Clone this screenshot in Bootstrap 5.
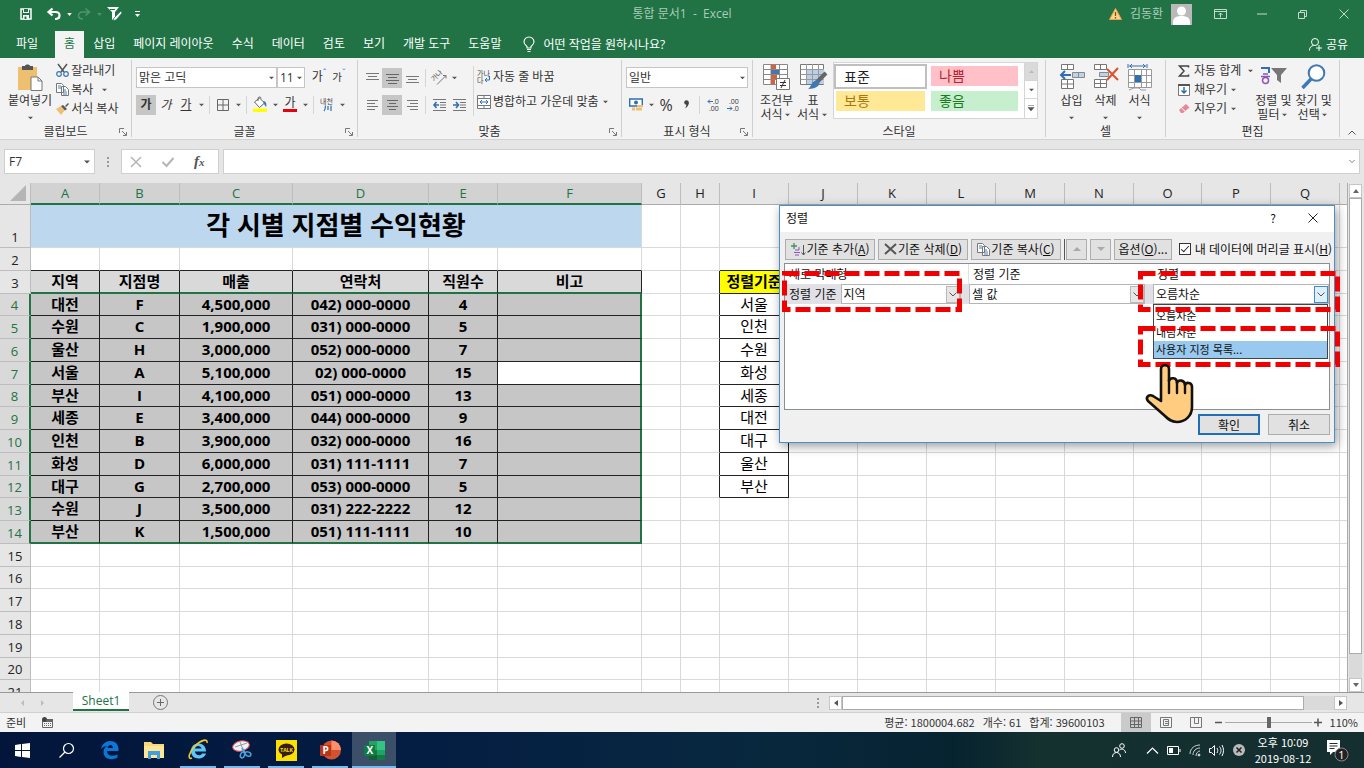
<!DOCTYPE html>
<html lang="ko">
<head>
<meta charset="utf-8">
<meta name="viewport" content="width=device-width, initial-scale=1">
<title>통합 문서1 - Excel</title>
<link href="https://cdn.jsdelivr.net/npm/bootstrap@5.3.0/dist/css/bootstrap.min.css" rel="stylesheet">
<style>
:root{--green:#217346;--ink:#333}
html,body{height:100%}
body{font:12px/16px "Open Sans","Noto Sans CJK KR",sans-serif;color:var(--ink);background:#e6e6e6;overflow:hidden}
svg{display:block;flex:none;overflow:visible}
button{color:inherit;border:0;background:none;padding:0;white-space:nowrap}
select,input{font:inherit;color:inherit}
a{color:inherit;text-decoration:none}
.app{height:100vh;min-height:600px}
/* title bar and tabs */
.titlebar{background:var(--green);height:28px;color:#a9cdb8}
.side{width:420px}
.wb{width:41px;height:28px;display:flex;align-items:center;justify-content:center;flex:none}
.tabs{background:var(--green);height:30px;color:#fff;padding:3px 16px 0 7px}
.tabs a{padding:0 9px;line-height:26px;white-space:nowrap}
.tabs .on{background:#f3f3f3;color:var(--green)}
/* ribbon */
.ribbon{background:#f3f3f3;height:82px;border-bottom:1px solid #d2d2d2;padding-top:2px}
.grp{border-right:1px solid #cfcfcf;height:77px;position:relative}
.grp-body{height:65px}
.cap{text-align:center;line-height:18px;margin-top:-2px}
.launch{position:absolute;right:4px;bottom:1px}
.w1{width:132px}.w2{width:226px}.w3{width:264px}.w4{width:131px}.w6{width:120px}.w7{width:174px}
.two{display:flex;flex-direction:column;gap:6px;padding-top:7px}
.two>*{height:21px}
.stk{padding-top:1px}
.ib{width:20px;height:20px;display:flex;align-items:center;justify-content:center;flex:none}
.ib.on{background:#c6c6c6}
.car{width:10px;height:20px;display:flex;align-items:center;justify-content:center;flex:none}
.sep{width:1px;height:18px;background:#d5d5d5;margin:0 3px;flex:none}
.tall{height:50px;margin-top:6px}
.combo{display:flex;align-items:center;background:#fff;border:1px solid #c6c6c6;height:21px;flex:none}
.combo select{appearance:none;border:0;background:none;outline:0;padding:0 0 0 2px;flex:1 1 auto;min-width:0;height:18px;line-height:18px}
.row-btn{display:flex;align-items:center;gap:2px;height:19px}
.big{display:flex;flex-direction:column;align-items:center;justify-content:flex-start;line-height:14px;padding-top:4px}
.big .pic{height:30px}
.big .car{height:14px}
.gallery{border:1px solid #d5d5d5;background:#fff;height:57px;width:205px;margin-top:2px}
.gal-grid{display:grid;grid-template-columns:93px 91px;grid-auto-rows:25px;gap:0 2px;padding-top:1px}
.gal-grid button{font-size:14px;text-align:left;padding:0 0 0 8px;margin:2px 2px 3px;line-height:20px}
.gal-grid .sel{outline:2px solid #bfbfbf;margin:2px;background:#fff;color:#222}
.bad{background:#ffc0c8;color:#b8232f}.mid{background:#ffe896;color:#a8780f}.good{background:#c6efce;color:#1b7a1f}
.gal-sc{width:13px;border-left:1px solid #d5d5d5}
.gal-sc button{height:18px;display:flex;align-items:center;justify-content:center;border-bottom:1px solid #d5d5d5}
/* formula bar */
.fbar{height:43px;padding:9px 4px 9px}
.fbox{background:#fff;border:1px solid #cfcfcf;height:25px;display:flex;align-items:center}
.fbox input{border:0;outline:0;padding:0 4px;min-width:0;background:none}
.nm{width:91px}
/* worksheet */
.sheet{min-height:0;position:relative}
.cells{overflow:hidden;min-width:0;background:#fff;border-right:1px solid #ababab}
.ws{table-layout:fixed;border-collapse:separate;border-spacing:0;width:1350px;font-size:15px;color:#000;text-align:center}
.ws th,.ws td{padding:0;border:0 solid #d9d9d9;border-width:0 1px 1px 0;line-height:18px;overflow:hidden;white-space:nowrap}
.ws td{line-height:16px;padding-bottom:2px}
.ws tr{height:23px}
.ws tbody tr:nth-child(4n){height:22px}
.ws thead tr{height:22px}
.ws tbody tr:first-child{height:43px}
.ws th{background:#e6e6e6;font-weight:400;font-size:13px;color:#222;border-color:#bdbdbd}
.ws tbody th{vertical-align:bottom;line-height:20px}
.ws thead th{border-bottom-color:#ababab;line-height:16px;padding-bottom:2px}
.ws thead .pick{background:#d2d2d2;color:var(--green);border-bottom:2px solid var(--green);padding-bottom:1px}
.ws tbody .pick{background:#d9d9d9;color:var(--green);border-right:2px solid var(--green)}
.ws .ttl{background:#bdd7ee;font-size:26px;font-weight:700;line-height:36px}
.ws .bk{border-color:#222}
.ws .bb{border-bottom-color:#222}
.ws .br{border-right-color:#222}
.ws .hd{background:#d9d9d9;font-weight:700}
.ws .hs{border-bottom:2px solid var(--green)}
.ws .dt{background:#c6c6c6;font-weight:700}
.ws .act{background:#fff}
.ws .re{border-right:2px solid var(--green)}
.ws .be{border-bottom:2px solid var(--green)}
.ws .ye{background:#ff0;font-weight:700}
.vs{width:16px;padding:1px 2px 0 1px}
.vs button,.hs-bar button{background:#fff;border:1px solid #c6c6c6;width:13px;height:14px;display:flex;align-items:center;justify-content:center;flex:none}
.track{background:#dadada}
.thumb{background:#fff;border:1px solid #ababab}
.tabbar{height:21px;border-top:1px solid #999;border-bottom:1px solid #d0d0d0;padding-right:17px}
.stab{background:#fff;color:var(--green);width:56px;height:19px;margin-top:-1px;border-bottom:2px solid var(--green);line-height:17px;text-align:center}
.hs-bar{width:518px}
.status{height:19px;background:#f3f3f3;font:11px/19px "Noto Sans CJK KR",sans-serif;padding:0 6px}
.vw{width:30px;height:19px;display:flex;align-items:center;justify-content:center}
.vw.on{background:#cacaca}
/* taskbar */
.taskbar{height:36px;background:linear-gradient(90deg,#03153a 0,#041d43 30%,#08283f 55%,#062330 70%,#14302f 76%,#152e30 100%);color:#fff}
.slot{width:44px;height:36px;display:flex;align-items:center;justify-content:center;position:relative}
.slot.run::after{content:"";position:absolute;left:4px;right:4px;bottom:0;height:2px;background:#76b9ed}
.slot.cur{background:#3b5068}
.slot.cur::after{left:0;right:0}
.clock{font:11px/16px "Noto Sans CJK KR",sans-serif;text-align:center;width:60px;margin-right:6px}
/* sort dialog */
.dlg{position:absolute;right:29px;top:22px;width:556px;height:238px;background:#f0f0f0;border:1px solid #4a90c8;box-shadow:2px 3px 10px #0006;color:#111;font-family:"Noto Sans CJK KR",sans-serif}
.dlg-title{background:#fff;height:26px;padding:0 16px 2px 6px}
.db{background:#e1e1e1;border:1px solid #adadad;height:21px;display:flex;align-items:center;justify-content:center;gap:1px;flex:none}
.w90{width:90px}.w21{width:21px}.w58{width:58px}.w62{width:62px}
.dbar{padding:7px 2px 4px 5px;height:31px}
.bar2{width:1px;height:21px;background:#555;margin:0 1px 0 2px}
.g3{gap:3px}
.dlist{margin:0 4px;border:1px solid #8a8f94;background:#fff;height:147px}
.dgrid{display:grid;grid-template-columns:184px 184px 1fr}
.dgrid>*{height:20px;display:flex;align-items:center}
.dgrid .sh{background:#e0e0e6}
.dgrid .combo{height:20px;border-color:#b5b5b5}
.arr{width:14px;height:17px;background:#e6e6e6;border:1px solid #b9b9b9;display:flex;align-items:center;justify-content:center;flex:none}
.arr.hot{background:#e0f0fb;border-color:#3c8dd0}
.drop{position:absolute;left:373px;top:98px;width:175px;background:#fff;border:1px solid #444;padding:2px 0 0;margin:0;list-style:none;font-size:11px;line-height:17px}
.drop li{padding-left:2px}
.drop .cur{background:#99c9ef}
.ok{border:2px solid #1f6fb8}
.note{position:absolute;pointer-events:none}
.n1{left:2px;top:65px}.n2{left:358px;top:65px}.n3{left:358px;top:120px}.hand{left:366px;top:158px}
.chk{width:12px;height:12px;margin:0;appearance:none;border:1px solid #333;background:#fff;display:grid;place-items:center;flex:none}
.chk:checked::after{content:"";width:4px;height:8px;border:solid #222;border-width:0 1px 1px 0;transform:rotate(42deg);margin-top:-2px}
</style>
</head>
<body>
<svg width="0" height="0" class="position-absolute">
<symbol id="c" viewBox="0 0 6 4"><path d="M0 .5h6L3 3.5z" fill="#555"/></symbol>
<symbol id="l" viewBox="0 0 8 8"><path d="M.5 5V.5H5M3 3l4 4M7.500 4v3.500H4" fill="none" stroke="#777"/></symbol>
<symbol id="v" viewBox="0 0 8 5"><path d="M.5.5L4 4 7.500.5" fill="none" stroke="#555"/></symbol>
</svg>
<div class="app d-flex flex-column">
<header class="titlebar d-flex align-items-center justify-content-between flex-shrink-0">
 <div class="side d-flex align-items-center ps-3">
  <button class="ib" aria-label="저장"><svg width="12" height="12" viewBox="0 0 12 12"><path d="M1 1h10v10H1z" fill="none" stroke="#fff" stroke-width="1.500"/><path d="M3 1h6v4H3zM3 7h6v4.500H3z" fill="#fff"/><path d="M4 1h4v3H4zM4.500 8.500h2V11h-2z" fill="#217346"/></svg></button>
  <button class="ib ms-2" aria-label="실행 취소"><svg width="14" height="12" viewBox="0 0 14 12"><path d="M5.500.5L1.500 4l4 3.500M2 4h6.500C11 4 12.500 5.500 12.500 7.500S11 11 8 11" fill="none" stroke="#fff" stroke-width="2.200"/></svg></button>
  <span class="car"><svg width="5" height="3" viewBox="0 0 6 4"><path d="M0 0h6L3 4z" fill="#fff"/></svg></span>
  <button class="ib" aria-label="다시 실행"><svg width="14" height="12" viewBox="0 0 14 12"><path d="M8.500.5l4 3.500-4 3.500M12 4H5.500C3 4 1.500 5.500 1.500 7.500S3 11 6 11" fill="none" stroke="#4f9470" stroke-width="1.600"/></svg></button>
  <span class="car"><svg width="5" height="3" viewBox="0 0 6 4"><path d="M0 0h6L3 4z" fill="#4f9470"/></svg></span>
  <button class="ib" aria-label="필터"><svg width="15" height="14" viewBox="0 0 15 14"><path d="M0 0h12L8 5v6l-3 2V5z" fill="#fff"/><path d="M14 4L7 11l-1 2.500L9 13l6-7z" fill="#fff" stroke="#217346" stroke-width=".7"/><path d="M3 2.500h5" stroke="#217346"/></svg></button>
  <span class="car ms-2"><svg width="5" height="6" viewBox="0 0 5 6"><path d="M0 .5h5" stroke="#fff"/><path d="M0 3h5L2.500 6z" fill="#fff"/></svg></span>
 </div>
 <div>통합 문서1 &nbsp;- &nbsp;Excel</div>
 <div class="side d-flex align-items-center justify-content-end">
  <svg width="13" height="12" viewBox="0 0 13 12"><path d="M6.500.5l6 11H.5z" fill="#fbd38a" stroke="#e9a548"/><path d="M6.500 4v4M6.500 9v1.500" stroke="#8a4b10" stroke-width="1.300"/></svg>
  <span class="ms-2 me-2">김동환</span>
  <svg class="me-2" width="21" height="21" viewBox="0 0 21 21"><path fill="#b9b9b9" d="M0 0h21v21H0z"/><circle cx="10.500" cy="7" r="4.500" fill="#fff"/><path d="M2 21v-3c0-4 3-6 8.500-6s8.500 2 8.500 6v3z" fill="#fff"/></svg>
  <button class="wb" aria-label="리본 표시 옵션"><svg width="13" height="10" viewBox="0 0 13 10"><path d="M.5.5h12v9H.5zM.5 2.500h12M6.500 8.500V4M4.500 6l2-2 2 2" fill="none" stroke="#c3dccd"/></svg></button>
  <button class="wb" aria-label="최소화"><svg width="10" height="2"><path d="M0 1h10" stroke="#c3dccd"/></svg></button>
  <button class="wb" aria-label="복원"><svg width="9" height="9" viewBox="0 0 9 9"><path d="M.5 2.500h6v6h-6zM2.500 2V.5h6v6H7" fill="none" stroke="#c3dccd"/></svg></button>
  <button class="wb" aria-label="닫기"><svg width="10" height="10" viewBox="0 0 10 10"><path d="M.5.5l9 9m0-9l-9 9" stroke="#c3dccd"/></svg></button>
 </div>
</header>
<nav class="tabs d-flex flex-shrink-0">
 <a href="#" class="me-2">파일</a><a href="#" class="on">홈</a><a href="#">삽입</a><a href="#">페이지 레이아웃</a><a href="#">수식</a><a href="#">데이터</a><a href="#">검토</a><a href="#">보기</a><a href="#">개발 도구</a><a href="#">도움말</a>
 <a href="#" class="d-flex align-items-center gap-2 ms-1"><svg width="12" height="15" viewBox="0 0 12 15"><path d="M4 11V9.500C2 8 1 7 1 5a5 5 0 0110 0c0 2-1 3-3 4.500V11zM4 12.500h4M4.500 14.500h3" fill="none" stroke="#fff" stroke-width="1.100"/></svg>어떤 작업을 원하시나요?</a>
 <a href="#" class="ms-auto pe-0 d-flex align-items-center gap-1"><svg width="13" height="13" viewBox="0 0 13 13"><circle cx="6" cy="4" r="3.500" fill="none" stroke="#fff"/><path d="M.5 12.500c0-3 1.500-4.500 4-5M10 7v6M7 10h6" fill="none" stroke="#fff"/></svg>공유</a>
</nav>
<section class="ribbon d-flex flex-shrink-0">
 <div class="grp w1"><div class="grp-body d-flex">
  <button class="big ps-2"><span class="pic"><svg width="26" height="27" viewBox="0 0 26 27"><path d="M1 3h19v23H1z" fill="#ecc06f"/><path d="M5 2h3c0-2 5-2 5 0h3v4H5z" fill="#555"/><path d="M14 13h7l4 4v9.500H14z" fill="#fff" stroke="#777"/><path d="M21 13v4h4" fill="none" stroke="#777"/></svg></span>붙여넣기<svg class="mt-2" width="5" height="4"><use href="#c"/></svg></button>
  <div class="ps-1 stk"><button class="row-btn"><svg width="13" height="13" viewBox="0 0 13 13"><path d="M2 0l6 8M11 0L5 8" stroke="#555" stroke-width="1.500"/><circle cx="3" cy="10" r="2.300" fill="none" stroke="#3f78b5" stroke-width="1.200"/><circle cx="10" cy="10" r="2.300" fill="none" stroke="#3f78b5" stroke-width="1.200"/></svg>잘라내기</button>
  <button class="row-btn"><svg width="13" height="13" viewBox="0 0 13 13"><path d="M.5.5h5l2 2v7h-7zM5.500 3.500h4l3 3v6h-7z" fill="#fff" stroke="#777"/><path d="M2 3h3M2 5h3M7 7h3M7 9h4M7 11h4" stroke="#4a7db5"/></svg>복사<span class="car ms-1"><svg width="5" height="4"><use href="#c"/></svg></span></button>
  <button class="row-btn"><svg width="13" height="12" viewBox="0 0 13 12"><path d="M0 6l5-3 4 4-4 5z" fill="#eebf76"/><path d="M5 3l2-1 4 4-2 1.500zM9 3l3-3 1 1-3 3z" fill="#555"/></svg>서식 복사</button></div>
 </div><div class="cap">클립보드</div><svg class="launch" width="8" height="8"><use href="#l"/></svg></div>

 <div class="grp w2"><div class="grp-body px-1 two"><div class="d-flex">
  <label class="combo flex-fill"><select aria-label="글꼴"><option>맑은 고딕</option></select><span class="car"><svg width="5" height="4"><use href="#c"/></svg></span></label>
  <label class="combo"><select aria-label="크기"><option>11</option></select><span class="car"><svg width="5" height="4"><use href="#c"/></svg></span></label>
  <button class="ib ms-1">가<sup class="text-primary">ˆ</sup></button><button class="ib me-1"><small>가</small><sup class="text-primary">ˇ</sup></button></div>
  <div class="d-flex align-items-center"><button class="ib on fw-bold">가</button><button class="ib fst-italic">가</button><button class="ib text-decoration-underline">가</button><span class="car"><svg width="5" height="4"><use href="#c"/></svg></span><span class="sep"></span>
  <button class="ib" aria-label="테두리"><svg width="12" height="12" viewBox="0 0 12 12"><path d="M.5.5h11v11H.5zM6 0v12M0 6h12" fill="none" stroke="#666"/></svg></button><span class="car"><svg width="5" height="4"><use href="#c"/></svg></span><span class="sep"></span>
  <button class="ib" aria-label="채우기 색"><svg width="14" height="15" viewBox="0 0 14 15"><path d="M1.500 5l5-4 5 5-5 4.500z" fill="#fff" stroke="#666"/><path d="M5 4V1.500a1.500 1.500 0 013 0" fill="none" stroke="#666"/><path d="M10 4c3 0 4 3 3 6l-2-3z" fill="#3f78b5"/><path d="M0 11.500h14v3.500H0z" fill="#ff0"/></svg></button><span class="car"><svg width="5" height="4"><use href="#c"/></svg></span>
  <button class="ib flex-column"><span class="lh-1">가</span><svg width="14" height="3"><path fill="#e8000b" d="M0 0h14v3H0z"/></svg></button><span class="car"><svg width="5" height="4"><use href="#c"/></svg></span><span class="sep"></span>
  <button class="ib" aria-label="윗주"><svg width="14" height="14" viewBox="0 0 14 14"><text x="0" y="6" font-size="7" fill="#444">내천</text><path d="M5.500 7.500c0 3 0 4-1.500 5.500M8 8v4M11 7.500V13" stroke="#3f78b5" stroke-width="1.300" fill="none"/></svg></button><span class="car"><svg width="5" height="4"><use href="#c"/></svg></span></div>
 </div><div class="cap">글꼴</div><svg class="launch" width="8" height="8"><use href="#l"/></svg></div>

 <div class="grp w3"><div class="grp-body d-flex ps-1"><div class="two">
  <div class="d-flex align-items-center"><button class="ib" aria-label="위쪽"><svg width="13" height="12"><path d="M0 1.500h13M2 4.500h9M0 7.500h13" stroke="#777"/></svg></button><button class="ib on" aria-label="가운데"><svg width="13" height="12"><path d="M0 2.500h13M2 5.500h9M0 8.500h13M2 11.500h9" stroke="#666"/></svg></button><button class="ib" aria-label="아래쪽"><svg width="13" height="10"><path d="M0 3.500h13M2 6.500h9M0 9.500h13" stroke="#777"/></svg></button><span class="sep"></span><button class="ib" aria-label="방향"><svg width="15" height="14" viewBox="0 0 15 14"><text transform="rotate(-45 4 9)" x="1" y="9" font-size="7" fill="#555">가나</text><path d="M5 13.500L14 4.500M14 7.500v-3h-3" fill="none" stroke="#777"/></svg></button><span class="car"><svg width="5" height="4"><use href="#c"/></svg></span></div>
  <div class="d-flex align-items-center"><button class="ib" aria-label="왼쪽 맞춤"><svg width="11" height="10"><path d="M0 .5h11M0 3.500h8M0 6.500h11M0 9.500h8" stroke="#777"/></svg></button><button class="ib on" aria-label="가운데 맞춤"><svg width="11" height="10"><path d="M0 .5h11M2 3.500h7M0 6.500h11M2 9.500h7" stroke="#666"/></svg></button><button class="ib" aria-label="오른쪽 맞춤"><svg width="11" height="10"><path d="M0 .5h11M3 3.500h8M0 6.500h11M3 9.500h8" stroke="#777"/></svg></button><span class="sep"></span><button class="ib" aria-label="내어쓰기"><svg width="13" height="12" viewBox="0 0 13 12"><path d="M0 .5h13M7 3.500h6M7 6h6M7 8.500h6M0 11.500h13" stroke="#777"/><path d="M6 6H1M3.500 3L1 6l2.500 3" stroke="#2f6fb3" stroke-width="1.600" fill="none"/></svg></button><button class="ib" aria-label="들여쓰기"><svg width="13" height="12" viewBox="0 0 13 12"><path d="M0 .5h13M7 3.500h6M7 6h6M7 8.500h6M0 11.500h13" stroke="#777"/><path d="M0 6h5M3 3l2.500 3L3 9" stroke="#2f6fb3" stroke-width="1.600" fill="none"/></svg></button></div></div>
  <span class="sep tall ms-1"></span>
  <div class="two"><button class="row-btn"><svg width="14" height="13" viewBox="0 0 14 13"><text x="0" y="6" font-size="7" fill="#444">가나</text><text x="0" y="13" font-size="7" fill="#444">다</text><path d="M12.500 6v4H8M10 8l-2 2 2 2" fill="none" stroke="#2f6fb3"/></svg>자동 줄 바꿈</button>
  <button class="row-btn"><svg width="14" height="14" viewBox="0 0 14 14"><path d="M.5.5h13v13H.5zM.5 3.500h13M.5 10.500h13M7 0v3M7 11v3" fill="#fff" stroke="#777"/><path d="M3 7h8M5 5L3 7l2 2M9 5l2 2-2 2" stroke="#2f6fb3" fill="none"/></svg>병합하고 가운데 맞춤<span class="car"><svg width="5" height="4"><use href="#c"/></svg></span></button></div>
 </div><div class="cap">맞춤</div><svg class="launch" width="8" height="8"><use href="#l"/></svg></div>

 <div class="grp w4"><div class="grp-body px-1 two"><div><label class="combo"><select aria-label="표시 형식"><option>일반</option></select><span class="car"><svg width="5" height="4"><use href="#c"/></svg></span></label></div>
  <div class="d-flex align-items-center"><button class="ib" aria-label="통화"><svg width="14" height="13" viewBox="0 0 14 13"><path d="M.7 1h12.600v7H.7z" fill="#fff" stroke="#2f6fb3" stroke-width="1.400"/><circle cx="7" cy="4.500" r="2" fill="#2f6fb3"/><path d="M8 7h6v2H8zM7 9.500h6v3H7z" fill="#eebf76"/><path d="M3 9.500h3v3H3z" fill="#eebf76"/></svg></button><span class="car"><svg width="5" height="4"><use href="#c"/></svg></span><button class="ib fs-6">%</button><button class="ib" aria-label="쉼표 스타일"><svg width="5" height="9" viewBox="0 0 5 9"><circle cx="2.500" cy="2.500" r="2.300" fill="#444"/><path d="M4.800 2.500C4.800 5 3.500 7 1 8.500c1-2 1.500-3 1.500-5z" fill="#444"/></svg></button><span class="sep"></span>
  <button class="ib" aria-label="자릿수 늘림"><svg width="13" height="12" viewBox="0 0 13 12"><text x="6" y="5" font-size="7" fill="#333">.0</text><text x="2" y="12" font-size="7" fill="#333">.00</text><path d="M6 2.500H1M3 .5l-2 2 2 2" stroke="#2f6fb3" fill="none"/></svg></button><button class="ib" aria-label="자릿수 줄임"><svg width="13" height="12" viewBox="0 0 13 12"><text x="2" y="5" font-size="7" fill="#333">.00</text><text x="6" y="12" font-size="7" fill="#333">.0</text><path d="M0 9.500h5M3 7.500l2 2-2 2" stroke="#2f6fb3" fill="none"/></svg></button></div>
 </div><div class="cap">표시 형식</div><svg class="launch" width="8" height="8"><use href="#l"/></svg></div>

 <div class="grp flex-fill"><div class="grp-body d-flex justify-content-center gap-1">
  <button class="big"><span class="pic"><svg width="27" height="26" viewBox="0 0 27 26"><path d="M.5.5h24v20H.5zM.5 5.500h24M.5 10.500h24M.5 15.500h24M8 0v20M16.500 0v20" fill="#fff" stroke="#888"/><path d="M8 1h5v4H8zM8 11h6v4H8zM8 16h4v4H8z" fill="#d9603b"/><path d="M8 6h8v4H8z" fill="#3f78b5"/><path d="M13.500 14.500h13v11h-13z" fill="#fff" stroke="#777"/><path d="M17 18.500h6M17 21.500h6M22 16l-4 8" stroke="#333"/></svg></span>조건부<span class="d-flex align-items-center">서식<span class="car"><svg width="5" height="4"><use href="#c"/></svg></span></span></button>
  <button class="big"><span class="pic"><svg width="27" height="26" viewBox="0 0 27 26"><path d="M.5.5h23v20H.5z" fill="#fff" stroke="#777"/><path d="M6 5h18v15H6z" fill="#b9cfe6"/><path d="M.5 5.500h23M.5 10.500h23M.5 15.500h23M6.500 0v20M12.500 0v20M18.500 0v20" stroke="#999"/><path d="M26 9L17 18" stroke="#666" stroke-width="4"/><path d="M17 16c3 1 3 4 1 6s-6 3-10 3c3-1 3-8 9-9z" fill="#3f78b5"/></svg></span>표<span class="d-flex align-items-center">서식<span class="car"><svg width="5" height="4"><use href="#c"/></svg></span></span></button>
  <div class="gallery d-flex justify-content-between"><div class="gal-grid"><button class="sel">표준</button><button class="bad">나쁨</button><button class="mid">보통</button><button class="good">좋음</button></div>
   <div class="gal-sc d-flex flex-column"><button class="track" aria-label="위로"><svg width="5" height="3"><path d="M0 3h5L2.500 0z" fill="#bbb"/></svg></button><button aria-label="아래로"><svg width="5" height="4"><use href="#c"/></svg></button><button class="border-0" aria-label="자세히"><svg width="6" height="6"><path d="M0 .5h6M0 2.500h6L3 6z" fill="#555" stroke="#555" stroke-width=".5"/></svg></button></div></div>
 </div><div class="cap">스타일</div></div>

 <div class="grp w6"><div class="grp-body d-flex justify-content-center gap-2">
  <button class="big"><span class="pic"><svg width="26" height="26" viewBox="0 0 26 26"><path d="M2.500.5h12v5h-12zM8.500.5v5M2.500 15.500h12v9h-12zM8.500 15.500v9M2.500 20h12" fill="#fff" stroke="#777"/><path d="M13.500 8.500h12v5h-12zM19.500 8.500v5" fill="#bcd3e8" stroke="#888"/><path d="M12 11H2M6 7l-4 4 4 4" stroke="#2f6fb3" stroke-width="2" fill="none"/></svg></span>삽입<svg class="mt-2" width="5" height="4"><use href="#c"/></svg></button>
  <button class="big"><span class="pic"><svg width="26" height="26" viewBox="0 0 26 26"><path d="M1.500.5h12v5h-12zM7.500.5v5M1.500 15.500h12v8h-12zM7.500 15.500v8M1.500 19.500h12" fill="#fff" stroke="#777"/><path d="M6.500 8.500h9v4h-9z" fill="#bcd3e8" stroke="#888"/><path d="M14 5l11 11M25 4L14 16" stroke="#d9532c" stroke-width="2"/></svg></span>삭제<svg class="mt-2" width="5" height="4"><use href="#c"/></svg></button>
  <button class="big"><span class="pic"><svg width="26" height="27" viewBox="0 0 26 27"><path d="M1.500 5.500h23v18h-23zM1.500 11.500h23M1.500 18.500h23M7.500 5v18M14.500 5v18M19.500 5v18M2 26l5-2h5l2 2h5" fill="#fff" stroke="#999"/><path d="M8 11h6v7H8z" fill="#2f6fb3"/><path d="M1 0v4M20 0v4M2 2h17M5 0L3 2l2 2M16 0l2 2-2 2" stroke="#2f6fb3" fill="none"/></svg></span>서식<svg class="mt-2" width="5" height="4"><use href="#c"/></svg></button>
 </div><div class="cap">셀</div></div>

 <div class="grp w7"><div class="grp-body d-flex ps-2 ms-1"><div class="stk">
  <button class="row-btn gap-1"><svg width="12" height="12" viewBox="0 0 12 12"><path d="M10.500 2.500V1H1.500L6 6l-4.500 5h9V9.500" fill="none" stroke="#444" stroke-width="1.500"/></svg>자동 합계<span class="car"><svg width="5" height="4"><use href="#c"/></svg></span></button>
  <button class="row-btn gap-1"><svg width="12" height="12" viewBox="0 0 12 12"><path d="M.5.5h11v11H.5z" fill="#fff" stroke="#777"/><path d="M0 1h12" stroke="#555" stroke-width="2"/><path d="M6 3v6M3.500 6.500L6 9l2.500-2.500" stroke="#2f6fb3" stroke-width="1.500" fill="none"/></svg>채우기<svg width="5" height="4"><use href="#c"/></svg></button>
  <button class="row-btn gap-1"><svg width="12" height="11" viewBox="0 0 12 11"><path d="M1 7l7-6 3.500 3.500L5 10H3z" fill="#e8879a"/><path d="M3.500 5l4 3.500" stroke="#fff"/></svg>지우기<svg width="5" height="4"><use href="#c"/></svg></button></div>
  <button class="big"><span class="pic"><svg width="28" height="22" viewBox="0 0 28 22"><path d="M2 4h8v5" fill="none" stroke="#2f6fb3" stroke-width="2"/><path d="M2 12.500h9M4 10h5" stroke="#8e55b8" stroke-width="1.500"/><circle cx="6.500" cy="16.500" r="3" fill="none" stroke="#8e55b8" stroke-width="1.500"/><path d="M12 4h16l-6 7v8l-4-3v-5z" fill="#777"/></svg></span>정렬 및<span class="d-flex align-items-center">필터<span class="car"><svg width="5" height="4"><use href="#c"/></svg></span></span></button>
  <button class="big ms-1"><span class="pic"><svg width="25" height="26" viewBox="0 0 25 26"><circle cx="15.500" cy="9" r="7.800" fill="#fff" stroke="#3f78b5" stroke-width="2"/><path d="M10 15L1.500 24" stroke="#3f78b5" stroke-width="3.500"/></svg></span>찾기 및<span class="d-flex align-items-center">선택<span class="car"><svg width="5" height="4"><use href="#c"/></svg></span></span></button>
 </div><div class="cap">편집</div></div>
 <button class="align-self-end px-2 py-1 ms-auto" aria-label="리본 축소"><svg width="8" height="5"><path d="M.5 4.500L4 1l3.500 3.500" fill="none" stroke="#555"/></svg></button>
</section>

<section class="fbar d-flex align-items-center flex-shrink-0">
 <label class="fbox nm"><input class="w-100" value="F7" aria-label="이름 상자"><svg class="mx-1" width="6" height="4"><use href="#c"/></svg></label>
 <svg class="mx-2" width="10" height="12"><path d="M5 1v11" stroke="#999" stroke-width="2" stroke-dasharray="2 2"/></svg>
 <div class="fbox px-1 me-1 gap-2"><button class="ib" aria-label="취소"><svg width="10" height="10"><path d="M0 0l10 10M10 0L0 10" stroke="#b5b5b5" stroke-width="1.500"/></svg></button><button class="ib mx-1" aria-label="입력"><svg width="12" height="10"><path d="M.5 5l4 4L11.500 1" stroke="#b5b5b5" stroke-width="2" fill="none"/></svg></button><button class="ib me-1" aria-label="함수 삽입"><svg width="14" height="15"><text x="1" y="12" font-family="Liberation Serif" font-style="italic" font-weight="700" font-size="15" fill="#555">f<tspan font-size="11">x</tspan></text></svg></button></div>
 <label class="fbox flex-fill"><input class="flex-fill" aria-label="수식 입력줄"><svg class="me-1" width="6" height="5" viewBox="0 0 8 5"><use href="#v"/></svg></label>
</section>

<main class="sheet d-flex flex-fill">
 <div class="cells flex-fill"><table class="ws" id="ws"></table></div>
 <div class="vs d-flex flex-column"><button aria-label="위로"><svg width="6" height="4"><path d="M0 4h6L3 0z" fill="#666"/></svg></button><div class="track flex-fill d-flex flex-column"><div class="thumb" style="height:95%"></div></div><button aria-label="아래로"><svg width="6" height="4"><path d="M0 0h6L3 4z" fill="#666"/></svg></button></div>

 <div class="dlg" role="dialog" aria-label="정렬">
  <div class="dlg-title d-flex align-items-center"><span class="flex-fill">정렬</span><button class="px-4 me-2" aria-label="도움말">?</button><button aria-label="닫기"><svg width="10" height="10"><path d="M.5.5l9 9m0-9l-9 9" stroke="#222"/></svg></button></div>
  <div class="dbar d-flex align-items-center g3">
   <button class="db w90"><svg width="15" height="13" viewBox="0 0 15 13"><path d="M3 0v6M0 3h6" stroke="#3f8f5a" stroke-width="1.300"/><path d="M4 7h4V4M3 9.500h6M4 12h4" stroke="#8e55b8" fill="none"/><path d="M12.500 2v10M10.500 9.500l2 2.500 2-2.500" stroke="#555" fill="none"/></svg><span>기준 추가(<u>A</u>)</span></button>
   <button class="db w90"><svg width="13" height="12"><path d="M1 1l11 10M12 1L1 11" stroke="#555" stroke-width="2"/></svg><span>기준 삭제(<u>D</u>)</span></button>
   <button class="db w90"><svg width="13" height="13" viewBox="0 0 13 13"><path d="M.5.5h5l2 2v7h-7zM5.500 3.500h4l3 3v6h-7z" fill="#fff" stroke="#777"/><path d="M2 3h3M2 5h3M7 7h3M7 9h4M7 11h4" stroke="#4a7db5"/></svg><span>기준 복사(<u>C</u>)</span></button>
   <div class="d-flex"><span class="bar2 ms-0"></span><button class="db w21" aria-label="위로 이동"><svg width="8" height="4"><path d="M0 4h8L4 0z" fill="#aaa"/></svg></button></div>
   <button class="db w21" aria-label="아래로 이동"><svg width="8" height="4"><path d="M0 0h8L4 4z" fill="#aaa"/></svg></button>
   <button class="db w58"><span>옵션(<u>O</u>)...</span></button>
   <label class="d-flex align-items-center gap-1 ms-auto text-nowrap"><input type="checkbox" class="chk" checked><span>내 데이터에 머리글 표시(<u>H</u>)</span></label>
  </div>
  <div class="dlist"><div class="dgrid">
   <span class="ps-1 border-end">세로 막대형</span><span class="ps-1">정렬 기준</span><span class="ps-1">정렬</span>
   <div class="sh pe-2"><label for="s1" class="text-nowrap ps-1 pe-1">정렬 기준</label><span class="combo flex-fill"><select id="s1"><option>지역</option></select><span class="arr"><svg width="8" height="5"><use href="#v"/></svg></span></span></div>
   <div class="sh pe-2"><span class="combo flex-fill"><select aria-label="정렬 기준"><option>셀 값</option></select><span class="arr"><svg width="8" height="5"><use href="#v"/></svg></span></span></div>
   <div><span class="combo flex-fill"><select aria-label="정렬"><option>오름차순</option></select><span class="arr hot"><svg width="8" height="5"><use href="#v"/></svg></span></span></div>
  </div></div>
  <div class="d-flex justify-content-end gap-2 pt-1 px-1"><button class="db w62 ok">확인</button><button class="db w62">취소</button></div>
  <ul class="drop" role="listbox" aria-label="정렬"><li role="option">오름차순</li><li role="option">내림차순</li><li role="option" aria-selected="true" class="cur">사용자 지정 목록...</li></ul>
  <svg class="note n1" width="180" height="41"><rect x="2.500" y="2.500" width="175" height="36" fill="none" stroke="#f00000" stroke-width="5" stroke-dasharray="15 5"/></svg>
  <svg class="note n2" width="202" height="41"><rect x="2.500" y="2.500" width="197" height="36" fill="none" stroke="#f00000" stroke-width="5" stroke-dasharray="15 5"/></svg>
  <svg class="note n3" width="202" height="41"><rect x="2.500" y="2.500" width="197" height="36" fill="none" stroke="#f00000" stroke-width="5" stroke-dasharray="15 5"/></svg>
  <svg class="note hand" width="48" height="60" viewBox="0 0 48 60"><path d="M15 37V5c0-5 8-5 8 0v12c1-4 8-4 8 2 1-4 8-3 8 2 1-3 7-3 7 2v20c0 9-7 15-15 15-6 0-9-3-12-6L2 37c-3-4 1-7 5-5z" fill="#ffcc80" stroke="#111" stroke-width="2.600" stroke-linejoin="round"/><path d="M23 16v13M31 18v11M39 20v9" stroke="#111" stroke-width="2.400" stroke-linecap="round"/></svg>
 </div>
</main>

<div class="tabbar d-flex align-items-center flex-shrink-0">
 <svg class="ms-3 me-4" width="33" height="6" viewBox="0 0 33 6"><path d="M8 0v6L5 3zM25 0v6l3-3z" fill="#bbb"/></svg>
 <a href="#" class="stab align-self-start">Sheet1</a>
 <button class="ms-4" aria-label="새 시트"><svg width="15" height="15"><circle cx="7.500" cy="7.500" r="7" fill="none" stroke="#777"/><path d="M4 7.500h7M7.500 4v7" stroke="#666"/></svg></button>
 <svg class="ms-auto me-2" width="6" height="12"><path d="M3 1v11" stroke="#999" stroke-width="2" stroke-dasharray="2 2"/></svg>
 <div class="hs-bar d-flex"><button aria-label="왼쪽"><svg width="4" height="6"><path d="M4 0v6L0 3z" fill="#555"/></svg></button><div class="track flex-fill d-flex"><div class="thumb" style="width:94%"></div></div><button aria-label="오른쪽"><svg width="4" height="6"><path d="M0 0v6l4-3z" fill="#555"/></svg></button></div>
</div>
<footer class="status d-flex align-items-center flex-shrink-0">
 <span>준비</span><svg class="ms-3" width="11" height="11" viewBox="0 0 11 11"><path d="M.5 2.500h10v8H.5zM1 4.500h10" fill="none" stroke="#666"/><path d="M2 6.500h8M2 8.500h8" stroke="#666" stroke-dasharray="1 1"/><circle cx="2.500" cy="2.500" r="2.500" fill="#444"/><path d="M5 2h6v2H5z" fill="#666"/></svg>
 <span class="ms-auto">평균: 1800004.682</span><span class="ms-2">개수: 61</span><span class="ms-2 me-3">합계: 39600103</span>
 <button class="vw on" aria-label="기본"><svg width="12" height="11"><path d="M.5.5h11v10H.5zM4.500 0v11M8.500 0v11M0 4h12M0 7.500h12" fill="none" stroke="#666"/></svg></button><button class="vw" aria-label="페이지 레이아웃"><svg width="12" height="11"><path d="M.5.500h11v10H.5zM3.500 2.500h5v6h-5zM5 4.500h3M5 6.500h3" fill="none" stroke="#777"/></svg></button><button class="vw" aria-label="페이지 나누기"><svg width="12" height="11"><path d="M.5.5h11v10H.5zM4.500 0v6.500h4V0" fill="none" stroke="#777"/></svg></button>
 <svg class="ms-1 me-2" width="107" height="11"><path d="M0 5.500h7M99 5.500h8M103 1.500v8" stroke="#555" stroke-width="1.500"/><path d="M10 5.500h87" stroke="#aaa"/><path d="M52 0h4v11h-4z" fill="#666"/></svg><span>110%</span>
</footer>
<footer class="taskbar d-flex align-items-center flex-shrink-0">
 <button class="slot" aria-label="시작"><svg width="15" height="15" viewBox="0 0 15 15"><path d="M0 2l6-1v6H0zM7 1l8-1v7H7zM0 8h6v6l-6-1zM7 8h8v7l-8-1z" fill="#fff"/></svg></button>
 <button class="slot" aria-label="검색"><svg width="15" height="15"><circle cx="9.500" cy="5.500" r="5" fill="none" stroke="#fff" stroke-width="1.200"/><path d="M6 9L.5 14.500" stroke="#fff" stroke-width="1.300"/></svg></button>
 <button class="slot" aria-label="Edge"><svg width="18" height="18" viewBox="0 0 18 18"><path d="M0 8C1 3 5 0 9 0c6 0 9 4 8.500 10H6c0 5 6 6 10.500 3.500v3C10 20 2 18 2.500 10 3 7 5 5.500 6.500 5 4 5 1.500 6 0 8zM6.500 7H12c0-4-5-4-5.500 0z" fill="#0a78d6" fill-rule="evenodd"/></svg></button>
 <button class="slot" aria-label="파일 탐색기"><svg width="20" height="17" viewBox="0 0 20 17"><path d="M0 0h7l2 2h11v14H0z" fill="#f7d97a"/><path d="M0 4h20v12H0z" fill="#fde69a"/><path d="M4 9h12v8h-3v-4H7v4H4z" fill="#3f9fdf"/></svg></button>
 <button class="slot run" aria-label="Internet Explorer"><svg width="20" height="20" viewBox="0 0 20 20"><path d="M18 11.500H7c0 4 6 5 7 2h4c-2 7-15 7-15-2.500C3 1 18 1 18 11.500zM7 8.500h6.500C13 5 7.500 5 7 8.500z" fill="#5fc7f5" fill-rule="evenodd"/><path d="M4 18C-1 20 1 12 7 6s13-8 12-3" fill="none" stroke="#f3c828" stroke-width="1.600"/></svg></button>
 <button class="slot run" aria-label="캡처 도구"><svg width="20" height="20" viewBox="0 0 20 20"><ellipse cx="9" cy="6" rx="8.500" ry="5" fill="#eef1f5" stroke="#d74452" transform="rotate(-12 9 6)"/><path d="M3 7l12-4M8 2l4 10" stroke="#999"/><ellipse cx="10.500" cy="15" rx="2" ry="3" fill="none" stroke="#4ba3df" stroke-width="1.500" transform="rotate(20 10.500 15)"/><ellipse cx="16" cy="14" rx="3" ry="2" fill="none" stroke="#4ba3df" stroke-width="1.500" transform="rotate(25 16 14)"/><path d="M10 8l3 5" stroke="#4ba3df" stroke-width="2"/></svg></button>
 <button class="slot run" aria-label="카카오톡"><svg width="21" height="21"><path fill="#fae100" d="M0 0h21v21H0z"/><ellipse cx="10.500" cy="9.500" rx="8" ry="6" fill="#371d1e"/><path d="M6 13v5l5-3z" fill="#371d1e"/><text x="10.500" y="11.500" text-anchor="middle" font-size="5" font-weight="700" fill="#fae100">TALK</text></svg></button>
 <button class="slot run" aria-label="PowerPoint"><svg width="21" height="20" viewBox="0 0 21 20"><circle cx="11.500" cy="10" r="9.500" fill="#d35230"/><path d="M11.500.5a9.500 9.500 0 019.500 9.500h-9.500z" fill="#ff8f6b"/><path fill="#b7361b" d="M0 5h11v11H0z"/><text x="2.500" y="14" font-size="10" font-weight="700" fill="#fff">P</text></svg></button>
 <button class="slot run cur" aria-label="Excel"><svg width="21" height="19" viewBox="0 0 21 19"><path fill="#21a366" d="M5 0h16v19H5z"/><path fill="#33c481" d="M13 0h8v9h-8z"/><path fill="#107c41" d="M5 9h8v5H5zM13 14h8v5h-8z"/><path fill="#185c37" d="M5 14h8v5H5z"/><path fill="#107c41" d="M0 4h11v11H0z"/><text x="2.500" y="13" font-size="10" font-weight="700" fill="#fff">X</text></svg></button>
 <div class="ms-auto d-flex align-items-center gap-2 pe-3">
  <svg class="me-2" width="14" height="14" fill="none" stroke="#fff"><circle cx="4.500" cy="7" r="2.300"/><path d="M.5 14c0-6 8-6 8 0"/><circle cx="10" cy="3" r="2.300"/><path d="M7.500 7c3-2 6 0 6 3"/></svg>
  <svg class="ms-1" width="13" height="7"><path d="M1 6.500l5.500-5.500L12 6.500" fill="none" stroke="#fff" stroke-width="1.200"/></svg>
  <svg width="14" height="9"><path d="M.5.5h11v8H.5zM13 3v3" fill="none" stroke="#fff"/><path d="M2 2h4v5H2z" fill="#fff"/></svg>
  <svg width="12" height="12" fill="none" stroke="#ccd4d4"><path d="M1 10C1 4 6 1 11 1M4 11c0-4 3-7 7-7M7 12c0-3 2-5 4-5"/><circle cx="10" cy="11" r="1" fill="#fff"/></svg>
  <svg width="16" height="13" fill="none" stroke="#fff"><path d="M.5 4.500h2l3-3v10l-3-3h-2zM8 4c1 2 1 3 0 5M10.500 2.500c2 3 2 5 0 8M13 1c2 4 2 7 0 11"/></svg>
  <svg width="12" height="12"><circle cx="6" cy="6" r="6" fill="#bbb"/><path d="M3.500 3.500l5 5m0-5l-5 5" stroke="#222" stroke-width="1.500"/></svg>
  <div class="clock">오후 10:09<br>2019-08-12</div>
  <svg width="21" height="21"><path d="M0 0h13v12H6l-3 3v-3H0z" fill="#fff"/><path d="M2.500 3.500h8M2.500 6h8M2.500 8.500h5" stroke="#17302f"/><circle cx="14.500" cy="14.500" r="6.500" fill="#222" stroke="#888"/><text x="14.500" y="18.500" text-anchor="middle" font-size="11" fill="#fff">1</text></svg>
 </div>
</footer>
</div>
<script>
const cols = 'ABCDEFGHIJKLMNOPQ'.split('');
const widths = [31,69,80,113,136,69,144,39,39,69,69,69,69,69,69,68,69,69];
const data = [
 ['대전','F','4,500,000','042) 000-0000','4',''],['수원','C','1,900,000','031) 000-0000','5',''],
 ['울산','H','3,000,000','052) 000-0000','7',''],['서울','A','5,100,000','02) 000-0000','15',''],
 ['부산','I','4,100,000','051) 000-0000','13',''],['세종','E','3,400,000','044) 000-0000','9',''],
 ['인천','B','3,900,000','032) 000-0000','16',''],['화성','D','6,000,000','031) 111-1111','7',''],
 ['대구','G','2,700,000','053) 000-0000','5',''],['수원','J','3,500,000','031) 222-2222','12',''],
 ['부산','K','1,500,000','051) 111-1111','10','']];
const heads = ['지역','지점명','매출','연락처','직원수','비고'];
const order = ['서울','인천','수원','화성','세종','대전','대구','울산','부산'];
let h = '<colgroup>' + widths.map(w => `<col style="width:${w}px">`).join('') + '<col></colgroup><thead><tr><th><svg class="ms-auto me-1" width="16" height="16"><path d="M16 0v16H0z" fill="#b5b5b5"/></svg></th>';
h += cols.map((c, i) => `<th scope="col" class="${i < 6 ? 'pick' : ''}">${c}</th>`).join('') + '<th></th></tr></thead><tbody>';
for (let r = 1; r <= 21; r++) {
  h += `<tr><th scope="row" class="${r > 3 && r < 15 ? 'pick' : ''}">${r}</th>`;
  if (r === 1) h += '<td colspan="6" class="ttl">각 시별 지점별 수익현황</td>';
  for (let c = r === 1 ? 6 : 0; c < 18; c++) {
    let k = '', t = '';
    if (c < 6 && r === 2) k = 'bb';
    if (c < 6 && r === 3) { k = 'bk hd hs'; t = heads[c]; }
    if (c < 6 && r > 3 && r < 15) {
      k = 'bk dt' + (c === 5 ? ' re' : '') + (r === 14 ? ' be' : '') + (c === 5 && r === 7 ? ' act' : '');
      t = data[r - 4][c];
    }
    if (c === 7 && r > 2 && r < 13) k = 'br';
    if (c === 8 && r === 2) k = 'bb';
    if (c === 8 && r === 3) { k = 'bk ye'; t = '정렬기준'; }
    if (c === 8 && r > 3 && r < 13) { k = 'bk'; t = order[r - 4]; }
    h += `<td class="${k}">${t}</td>`;
  }
  h += '</tr>';
}
document.getElementById('ws').innerHTML = h + '</tbody>';
</script>
<script src="https://cdn.jsdelivr.net/npm/bootstrap@5.3.0/dist/js/bootstrap.bundle.min.js"></script>
</body>
</html>
